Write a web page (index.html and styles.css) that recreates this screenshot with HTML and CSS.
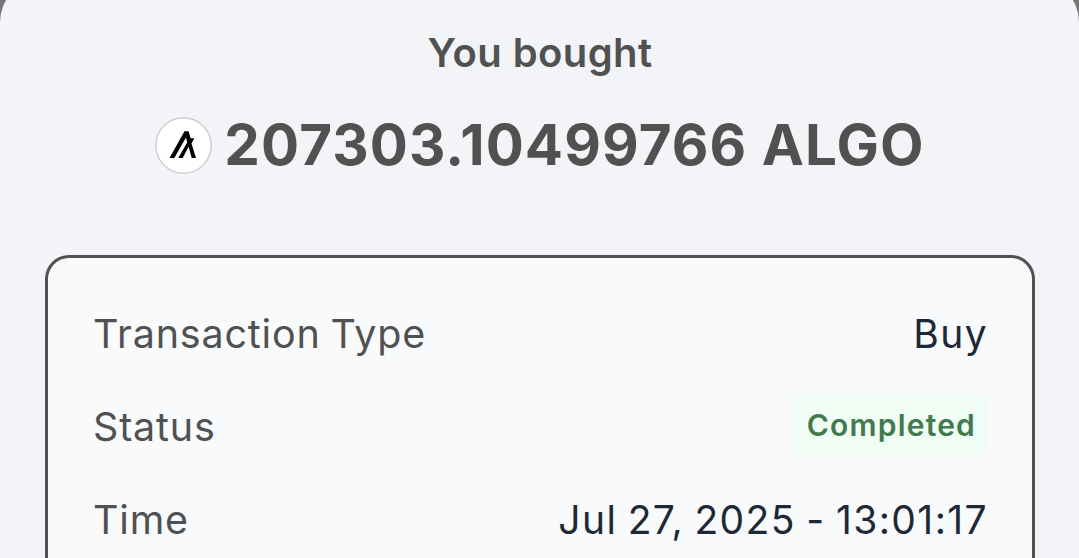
FILE: index.html
```html
<!DOCTYPE html>
<html lang="en">

<head>
    <title>Transaction Details</title>
    <meta charset="UTF-8">
    <meta name="viewport" content="width=device-width, initial-scale=1.0">
    <link rel="stylesheet" href="styles.css">
</head>

<body>
    <div class="sheet">
        <h1 class="title">You bought</h1>
        <div class="amount">
            <svg class="coin" viewBox="0 0 57 57">
                <circle cx="28.500" cy="28.500" r="27.700" fill="#fff" stroke="#c8c8c8" stroke-width="1.300" />
                <path d="M14.500 41L29.500 14.200H33.500L35.700 21.200H39.300L36.500 26.500L41 41H36.700L33.600 29.800L27.700 41H23.200L32.200 25.500L31 20.500L19.300 41Z" fill="#000" />
            </svg>
            <span>207303.10499766 ALGO</span>
        </div>
        <div class="details">
            <div class="row">
                <span class="label">Transaction Type</span>
                <span class="value">Buy</span>
            </div>
            <div class="row">
                <span class="label">Status</span>
                <span class="badge">Completed</span>
            </div>
            <div class="row">
                <span class="label">Time</span>
                <span class="value">Jul 27, 2025 - 13:01:17</span>
            </div>
        </div>
    </div>
</body>

</html>
```
FILE: styles.css
```css
* {
    margin: 0;
    padding: 0;
    box-sizing: border-box;
}

body {
    font-family: Inter, sans-serif;
    background-color: #777779;
    height: 558px;
    overflow: hidden;
}

.sheet {
    background-color: #f3f4f8;
    border-radius: 42px 42px 0 0;
    height: 578px;
    margin-top: -20px;
    padding: 49px 44px 0 45px;
}

.title {
    color: #505151;
    font-size: 40px;
    font-weight: 600;
    line-height: 48px;
    letter-spacing: 0.4px;
    text-align: center;
}

.amount {
    display: flex;
    align-items: center;
    justify-content: center;
    gap: 12px;
    margin-top: 32px;
    height: 72px;
    color: #505151;
    font-size: 56.5px;
    font-weight: 700;
    letter-spacing: 1.1px;
    white-space: nowrap;
}

.amount span {
    margin-top: -1px;
}

.coin {
    width: 57px;
    height: 57px;
}

.details {
    background-color: #f8fafc;
    border: 3px solid #505252;
    border-bottom: 0;
    border-radius: 24px 24px 0 0;
    height: 303px;
    margin-top: 74px;
    padding: 29px 45px 0;
}

.row {
    display: flex;
    align-items: center;
    justify-content: space-between;
    height: 93px;
    font-size: 39.5px;
    letter-spacing: 0.8px;
    word-spacing: -2px;
}

.label {
    color: #505151;
}

.value {
    color: #1e2836;
    font-size: 39px;
    letter-spacing: 1.4px;
    margin-right: -1px;
}

.badge {
    background-color: #f0fdf4;
    border-radius: 6px;
    color: #427a4d;
    font-size: 30px;
    font-weight: 600;
    letter-spacing: 1.2px;
    line-height: 60px;
    margin-bottom: 4px;
    padding: 0 11px 0 14px;
}
```
